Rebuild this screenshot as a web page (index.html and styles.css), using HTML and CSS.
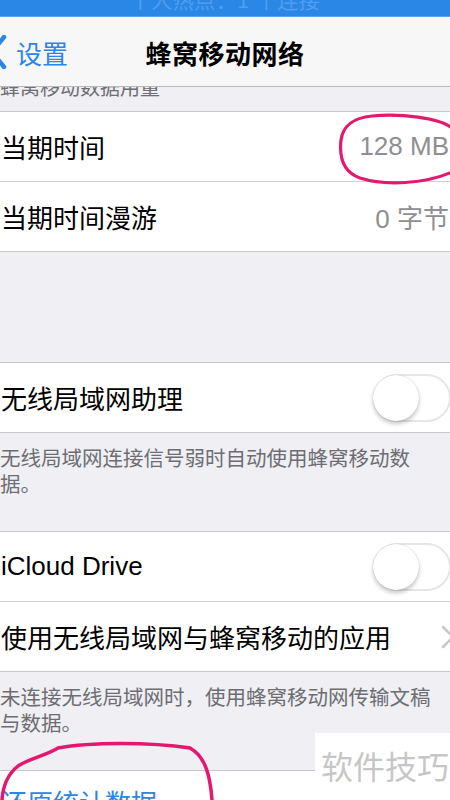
FILE: index.html
```html
<!DOCTYPE html>
<html lang="zh-CN">
<head>
<meta charset="utf-8">
<title>蜂窝移动网络</title>
<link rel="stylesheet" href="styles.css">
</head>
<body>
<div class="screen">
  <div class="status"><span class="status-text">个人热点：1 个连接</span></div>
  <header class="nav">
    <div class="back">
      <svg class="back-icon" width="20" height="34" viewBox="0 0 20 34"><polyline points="14,2 2,17 14,32" fill="none" stroke="#2c86e4" stroke-width="4.5" stroke-linecap="round" stroke-linejoin="round"/></svg>
      <span>设置</span>
    </div>
    <h1 class="title">蜂窝移动网络</h1>
  </header>

  <div class="section-head">蜂窝移动数据用量</div>
  <div class="group">
    <div class="row"><span class="label">当期时间</span><span class="value">128 MB</span></div>
    <div class="row"><span class="label">当期时间漫游</span><span class="value">0 字节</span></div>
  </div>

  <div class="spacer"></div>

  <div class="group">
    <div class="row"><span class="label">无线局域网助理</span><span class="toggle"><span class="knob"></span></span></div>
  </div>
  <p class="foot">无线局域网连接信号弱时自动使用蜂窝移动数据。</p>

  <div class="group">
    <div class="row"><span class="label">iCloud Drive</span><span class="toggle"><span class="knob"></span></span></div>
    <div class="row"><span class="label">使用无线局域网与蜂窝移动的应用</span>
      <svg class="chev" width="16" height="26" viewBox="0 0 16 26"><polyline points="3,3 13,13 3,23" fill="none" stroke="#c7c7cc" stroke-width="2.5" stroke-linecap="round" stroke-linejoin="round"/></svg>
    </div>
  </div>
  <p class="foot">未连接无线局域网时，使用蜂窝移动网传输文稿与数据。</p>

  <div class="group">
    <div class="row"><span class="label link">还原统计数据</span></div>
  </div>

  <svg class="marks" width="450" height="800" viewBox="0 0 450 800">
    <path d="M452 128 C 440 118, 400 113, 372 116 C 352 118, 343 126, 341 140 C 339 158, 343 172, 360 178 C 385 186, 425 184, 452 172" fill="none" stroke="#e3186e" stroke-width="3.2" stroke-linecap="round"/>
    <path d="M2 800 C 3 784, 8 774, 18 766 C 30 758, 45 756, 58 748 C 90 742, 150 742, 190 748 C 204 756, 210 772, 212 800" fill="none" stroke="#e3186e" stroke-width="3.5" stroke-linecap="round"/>
  </svg>
  <div class="watermark">软件技巧</div>
</div>
</body>
</html>
```

FILE: styles.css
```css
* { box-sizing: border-box; }
html, body { margin: 0; padding: 0; }
body {
  width: 450px;
  height: 800px;
  overflow: hidden;
  background: #efeff4;
  font-family: "Liberation Sans", "Noto Sans CJK SC", sans-serif;
  color: #000;
}
.screen {
  position: relative;
  width: 450px;
  height: 800px;
  overflow: hidden;
}
.status {
  height: 17px;
  background: #2a87e5;
  overflow: hidden;
  display: flex;
  justify-content: center;
  border-bottom: 1px solid #5aa3ee;
}
.status-text {
  font-size: 21px;
  line-height: 21px;
  margin-top: -10px;
  color: #4f9ef0;
  letter-spacing: 0.5px;
}
.nav {
  position: relative;
  z-index: 2;
  height: 70px;
  background: #f7f7f8;
  border-bottom: 1px solid #b8b8bc;
  display: flex;
  align-items: center;
  justify-content: center;
}
.back {
  position: absolute;
  left: -10px;
  top: 0;
  height: 100%;
  display: flex;
  align-items: center;
  gap: 6px;
  color: #2c86e4;
  font-size: 26px;
  padding-top: 2px;
}
.back-icon { display: block; margin-top: -2px; }
.title {
  margin: 0;
  font-size: 26px;
  font-weight: 700;
  letter-spacing: 0.5px;
  padding-top: 2px;
}
.section-head {
  margin-top: -12px;
  padding: 0 0 10px 0;
  height: 36px;
  font-size: 20px;
  line-height: 26px;
  color: #6d6d72;
}
.group {
  background: #fff;
  border-top: 1px solid #c8c7cc;
  border-bottom: 1px solid #c8c7cc;
}
.row {
  height: 70px;
  display: flex;
  align-items: center;
  justify-content: space-between;
  padding-left: 1px;
  font-size: 26px;
  border-top: 1px solid #d2d2d6;
}
.row:first-child { border-top: none; height: 69px; }
.label { white-space: nowrap; }
.link { color: #2c86e4; margin-top: -8px; }
.value { color: #8e8e93; white-space: nowrap; padding-right: 1px; }
.spacer { height: 110px; }
.toggle {
  width: 78px;
  height: 48px;
  border: 2px solid #e6e6e6;
  border-radius: 24px;
  margin-right: -1px;
  position: relative;
  background: #fff;
  flex: none;
}
.knob {
  position: absolute;
  left: -2px;
  top: -1px;
  width: 46px;
  height: 46px;
  border-radius: 50%;
  background: #fff;
  box-shadow: 0 3px 4px rgba(0,0,0,0.22), 0 0 1px rgba(0,0,0,0.25);
}
.chev { margin-right: -6px; flex: none; }
.foot {
  margin: 0;
  padding: 13px 0 33px 0;
  font-size: 20.5px;
  line-height: 26px;
  color: #6d6d72;
}
.marks {
  position: absolute;
  left: 0;
  top: 0;
  pointer-events: none;
}
.watermark {
  position: absolute;
  left: 315px;
  top: 733px;
  width: 135px;
  height: 67px;
  background: #fff;
  color: #c6c6c6;
  font-size: 32px;
  font-family: "Noto Sans CJK SC", sans-serif;
  line-height: 64px;
  padding-left: 6px;
  padding-top: 0;
}
```
